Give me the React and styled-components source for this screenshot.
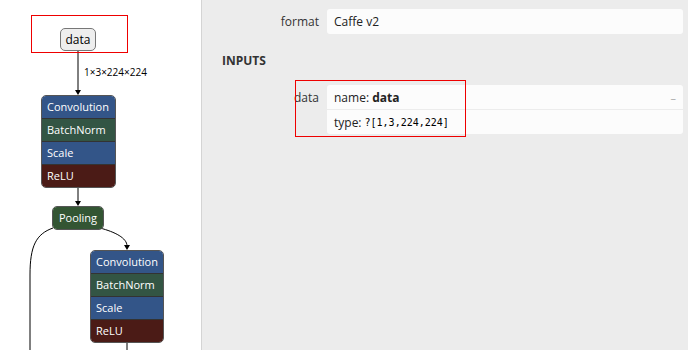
import React from 'react';
import styled, { createGlobalStyle } from 'styled-components';

const GlobalStyle = createGlobalStyle`
  html, body {
    margin: 0;
    padding: 0;
    width: 688px;
    height: 350px;
    overflow: hidden;
    font-family: "Open Sans", "Noto Sans", sans-serif;
  }
`;

const Page = styled.div`
  display: flex;
  width: 688px;
  height: 350px;
`;

const GraphPanel = styled.div`
  position: relative;
  width: 201px;
  height: 350px;
  flex: none;
  background: #fff;
  border-right: 1px solid #d4d4d4;
  overflow: hidden;
`;

const Edges = styled.svg`
  position: absolute;
  left: 0;
  top: 0;
`;

const EdgeLabel = styled.div`
  position: absolute;
  left: ${(p) => p.x}px;
  top: ${(p) => p.y}px;
  font-size: 10px;
  color: #000;
  white-space: nowrap;
`;

const InputNode = styled.div`
  position: absolute;
  left: ${(p) => p.x}px;
  top: ${(p) => p.y}px;
  width: 36px;
  height: 23px;
  box-sizing: border-box;
  border: 1px solid #777;
  border-radius: 5px;
  background: #eee;
  display: flex;
  align-items: center;
  justify-content: center;
  font-size: 12px;
  color: #000;
`;

const Stack = styled.div`
  position: absolute;
  left: ${(p) => p.x}px;
  top: ${(p) => p.y}px;
  width: ${(p) => p.w}px;
  box-sizing: border-box;
  border: 1px solid #555;
  border-radius: 5px;
  overflow: hidden;
  display: flex;
  flex-direction: column;
`;

const colors = {
  layer: 'rgb(51, 85, 136)',
  normalization: 'rgb(51, 85, 68)',
  activation: 'rgb(75, 27, 22)',
  pool: 'rgb(51, 85, 51)',
};

const Item = styled.div`
  height: 22px;
  line-height: 22px;
  padding: 0 5px;
  font-size: 11px;
  color: #fff;
  background: ${(p) => colors[p.kind]};
  text-align: ${(p) => (p.center ? 'center' : 'left')};
  white-space: nowrap;
  & + & {
    border-top: 1px solid #333;
  }
`;

const Highlight = styled.div`
  position: absolute;
  left: ${(p) => p.x}px;
  top: ${(p) => p.y}px;
  width: ${(p) => p.w}px;
  height: ${(p) => p.h}px;
  box-sizing: border-box;
  border: 1px solid #e00;
  pointer-events: none;
`;

const Sidebar = styled.div`
  position: relative;
  flex: 1;
  background: #ececec;
  padding: 9px 5px 0 0;
  font-size: 12px;
  color: #333;
`;

const PropRow = styled.div`
  display: grid;
  grid-template-columns: 117px 1fr;
  column-gap: 8px;
`;

const PropName = styled.div`
  text-align: right;
  padding-top: ${(p) => p.top}px;
  color: #333;
`;

const ValueBox = styled.div`
  background: #fcfcfc;
  border-radius: 3px;
  display: flex;
  flex-direction: column;
`;

const ValueLine = styled.div`
  position: relative;
  height: ${(p) => p.h}px;
  display: flex;
  align-items: center;
  padding: 0 7px;
  color: #222;
  & + & {
    border-top: 1px solid #ececec;
  }
`;

const Toggle = styled.span`
  position: absolute;
  right: 7px;
  top: 5px;
  color: #aaa;
  font-size: 11px;
`;

const Mono = styled.span`
  font-family: "DejaVu Sans Mono", "Liberation Mono", monospace;
  font-size: 10px;
  color: #000;
  margin-left: 3px;
`;

const SectionTitle = styled.div`
  padding: 0 0 16px 20px;
  margin-top: 18px;
  font-size: 12px;
  font-weight: bold;
  color: #333;
`;

const Arrow = ({ x, y }) => (
  <path d={`M${x - 3} ${y - 5} L${x + 3} ${y - 5} L${x} ${y} Z`} fill="#000" />
);

export default function App() {
  return (
    <Page>
      <GlobalStyle />
      <GraphPanel>
        <Edges width="201" height="350">
          <g fill="none" stroke="#000" strokeWidth="1">
            <path d="M78 51 L78 91" />
            <path d="M78 186 L78 202" />
            <path d="M100 228 C115 232 127 238 127 246" />
            <path d="M53 228 C36 234 30 246 30 275 L30 350" />
            <path d="M127 341 L127 350" />
          </g>
          <Arrow x={78} y={95} />
          <Arrow x={78} y={206} />
          <Arrow x={127} y={250} />
        </Edges>
        <InputNode x={60} y={28}>data</InputNode>
        <EdgeLabel x={84} y={65}>1×3×224×224</EdgeLabel>
        <Stack x={41} y={95} w={75}>
          <Item kind="layer">Convolution</Item>
          <Item kind="normalization">BatchNorm</Item>
          <Item kind="layer">Scale</Item>
          <Item kind="activation">ReLU</Item>
        </Stack>
        <Stack x={52} y={206} w={52}>
          <Item kind="pool" center>Pooling</Item>
        </Stack>
        <Stack x={90} y={250} w={74}>
          <Item kind="layer">Convolution</Item>
          <Item kind="normalization">BatchNorm</Item>
          <Item kind="layer">Scale</Item>
          <Item kind="activation">ReLU</Item>
        </Stack>
        <Highlight x={31} y={15} w={97} h={38} />
      </GraphPanel>
      <Sidebar>
        <PropRow>
          <PropName top={4}>format</PropName>
          <ValueBox>
            <ValueLine h={25}>Caffe v2</ValueLine>
          </ValueBox>
        </PropRow>
        <SectionTitle>INPUTS</SectionTitle>
        <PropRow>
          <PropName top={4}>data</PropName>
          <ValueBox>
            <ValueLine h={24}>
              name:&nbsp;<b>data</b>
              <Toggle>–</Toggle>
            </ValueLine>
            <ValueLine h={24}>
              type:<Mono>?[1,3,224,224]</Mono>
            </ValueLine>
          </ValueBox>
        </PropRow>
        <Highlight x={93} y={80} w={171} h={57} />
      </Sidebar>
    </Page>
  );
}
